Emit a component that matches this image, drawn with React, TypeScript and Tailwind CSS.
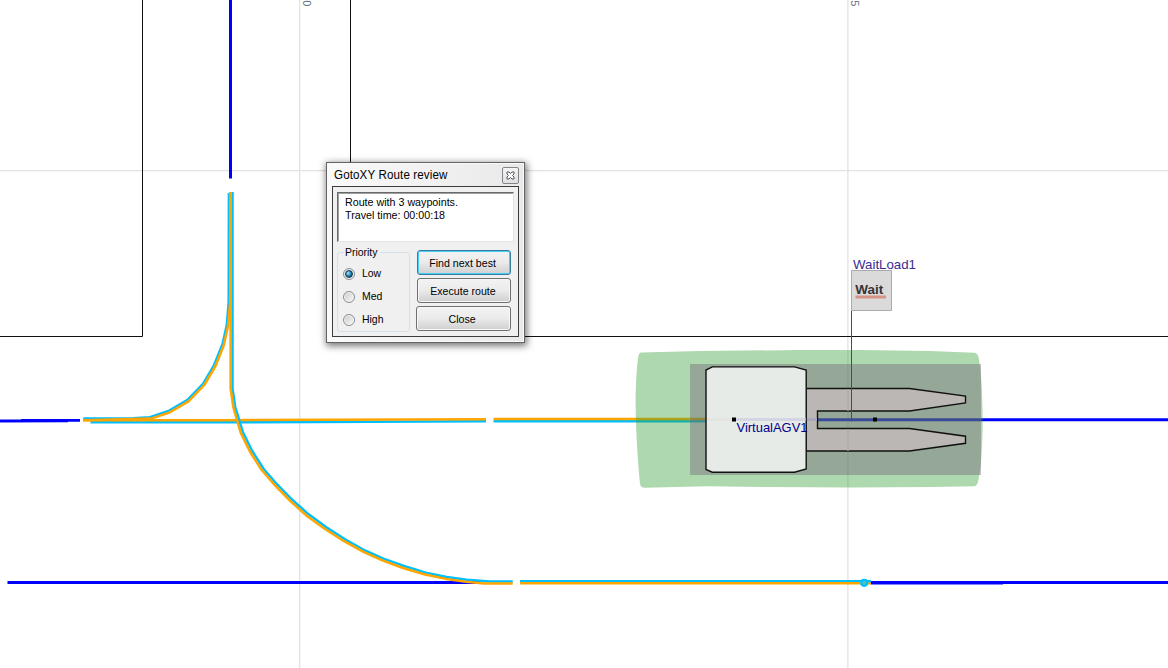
import React from "react";

function RouteMap() {
  return (
    <svg width="1168" height="668" viewBox="0 0 1168 668" className="block" fill="none">
      <g stroke="#e2e2e2" strokeWidth="1.3">
        <path d="M299.7 0V668M847.9 0V668M0 170.6H1168" />
      </g>
      <g fontFamily="Liberation Sans, sans-serif" fontSize="11" fill="#667080">
        <text transform="translate(303 0.3) rotate(90)">0</text>
        <text transform="translate(850.8 0.3) rotate(90)">5</text>
      </g>
      <g stroke="#111" strokeWidth="1">
        <path d="M142.5 0V336.5H0M350.5 0V336.5H1168" />
      </g>

      <g stroke="#0000ff" strokeWidth="3">
        <path d="M230.5 0V178.5" />
        <path d="M0 421L68 420.9M21 420.4H80" strokeWidth="2.8" />
        <path d="M704 419.7H1168" />
        <path d="M7.5 582.4H480M871 582.4H1168" />
        <path d="M871 583.1H1003" strokeWidth="2.6" />
      </g>

      <g strokeWidth="2.5" strokeLinejoin="round">
        <path stroke="#00bfff" d="M90.5 422.3H220L486 421.3M493.5 421.2H706" />
        <path stroke="#ffa500" d="M83 420.2H220L486 419.2M493.5 419.1H706" />
        <path stroke="#00bfff" d="M83.3 418.5L133 418.3L150 417.2L168.5 411L187.5 399.8L203 383.8L214 365.3L222.5 344.3L226.8 325L228.7 302L228.9 193" />
        <path stroke="#00bfff" d="M232.5 192V388.5L235.2 407L239.5 421L242.7 431.7L251.9 450.5L263.5 468.7L276.7 484L291.7 499.3L308.3 514.1L326 527.1L345 539.3L365 550.5L383.3 558.6L404 566L425.7 572.6L446.7 577L466.7 579.8L490 581.5H512.7" />
        <path stroke="#ffa500" d="M83.3 420.2L151 418.6L169.5 412.5L188.5 401.3L204.3 385L215.5 366L223.7 345.5L228 326L230.2 302L230.4 192" />
        <path stroke="#ffa500" d="M230.6 192V388.5L233.5 408L237 420L240.7 432.6L249.9 451.5L261.5 469.8L275.3 485.7L290.3 501L307 516L325 529L344 541.2L364 552.2L382.3 560.4L403 568L425 574.5L446 578.9L466 581.7L484 583.4H512.7" />
        <path stroke="#00bfff" d="M520 581.2H871" />
        <path stroke="#ffa500" d="M520 583.3H871" />
      </g>
      <path d="M864 581.2H871" stroke="#00bfff" strokeWidth="2.4" />
      <circle cx="864.2" cy="582.8" r="3" fill="#5bbfae" stroke="#00bfff" strokeWidth="2.2" />

      <path
        d="M641 352.6L700 351L800 350L860 350L930 351L974 352.8Q977.5 353 978.5 357C981 369 982.5 391 982.7 420C982.5 445 981.5 467 978 482Q977 486 974 486.3L930 487L850 487.6L770 487L706 486.2L645 487.7Q640.5 487.8 640 484C638 463 636 435 635.6 406C635.5 388 636.5 371 638 358Q638.7 353 641 352.6Z"
        fill="#349e35"
        fillOpacity="0.4"
      />
      <path d="M690 364H981V475H690Z" fill="#705e75" fillOpacity="0.4" />
      <path
        d="M806 388.5H909.5L965.5 396V403L909.5 411H817.5V428.5H909.5L965.5 436.2V443.3L909.5 451H806Z"
        fill="#bab7b4"
        stroke="#111"
        strokeWidth="1.4"
      />
      <path d="M806 419.5H817" stroke="#aaa7bd" strokeWidth="3" />
      <path d="M848 389V411M848 429V451" stroke="#acaaa7" strokeWidth="1.2" />
      <path
        d="M712.3 366.9H794.5L806.2 370V469L794.5 472.2H712.3L706 469.5V370Z"
        fill="#e6ebe8"
        stroke="#111"
        strokeWidth="1.4"
      />
      <path d="M707 419.5H732" stroke="#e5e5df" strokeWidth="3" />
      <path d="M736 419.5H805.5" stroke="#d5d4e5" strokeWidth="3" />
      <path d="M851.5 311V421.5" stroke="#49418a" strokeWidth="1" />
      <path d="M732 417.5H736V421.5H732ZM873 417.5H877V421.5H873Z" fill="#000" />
      <text x="736.5" y="432" fontFamily="Liberation Sans, sans-serif" fontSize="13.3" fill="#00008b" textLength="71" lengthAdjust="spacingAndGlyphs">
        VirtualAGV1
      </text>

      <text x="853" y="269" fontFamily="Liberation Sans, sans-serif" fontSize="13.3" fill="#392b94" textLength="63" lengthAdjust="spacingAndGlyphs">
        WaitLoad1
      </text>
      <path d="M851.5 270.5H891.5V310.5H851.5Z" fill="#dadada" stroke="#aaa9ad" />
      <text x="855.3" y="293.5" fontFamily="Liberation Sans, sans-serif" fontSize="12.5" fontWeight="bold" fill="#393333" textLength="28" lengthAdjust="spacingAndGlyphs">
        Wait
      </text>
      <path d="M855.5 297H886" stroke="#d79485" strokeWidth="3" />
    </svg>
  );
}

function PriorityOption({ label, checked, onSelect }: { label: string; checked: boolean; onSelect: () => void }) {
  return (
    <label className="flex h-[23px] items-center gap-[7px] pl-[5px]">
      <input type="radio" name="priority" checked={checked} onChange={onSelect} className="sr-only" />
      <span className="flex size-3 items-center justify-center rounded-full border border-[#8a8f94] bg-linear-to-br from-[#c8cbce] to-[#fafafa] shadow-[inset_0_0_0_1px_#f4f4f4]">
        {checked && <span className="size-[8px] shrink-0 rounded-full border border-[#17384f] bg-radial-[at_35%_35%] from-[#a9ebff] via-[#2383b5] to-[#0b314c]" />}
      </span>
      <span className="origin-left scale-x-[0.95]">{label}</span>
    </label>
  );
}

function ActionButton({ label, focused = false, wide = false }: { label: string; focused?: boolean; wide?: boolean }) {
  return (
    <button
      className={`h-[25px] rounded-[3px] border bg-linear-to-b from-[#f3f3f3] from-0% via-[#ebebeb] via-49% to-[#cfcfcf] pt-px ${
        focused ? "border-[#377da2] shadow-[inset_0_0_0_1px_#49cff5]" : "border-[#707070] shadow-[inset_0_0_0_1px_#f7f7f7]"
      } ${wide ? "w-[95px]" : "w-[94px]"}`}
    >
      <span className="relative -left-px inline-block origin-center scale-x-[0.965]">{label}</span>
    </button>
  );
}

function RouteDialog() {
  const [priority, setPriority] = React.useState("Low");
  return (
    <section className="absolute top-[162px] left-[326px] flex h-[181px] w-[199px] flex-col border border-[#646464] bg-linear-to-r from-[#fafafa] to-[#e9e9e9] px-[5px] pb-[5px] shadow-[inset_0_0_0_1px_#fafafa,1px_2px_7px_1px_#0008]">
      <header className="flex h-[23px] shrink-0 items-center justify-between pl-[2px]">
        <h1 className="origin-left scale-x-[0.965] text-[12px] leading-[14px] tracking-[0.13px]">GotoXY Route review</h1>
        <button aria-label="Close dialog" className="mt-px flex size-[17px] items-center justify-center rounded-[2px] border border-[#85838a] bg-linear-to-b from-[#f4f4f4] to-[#dfdfdf]">
          <svg width="9" height="9" viewBox="0 0 9 9" fill="#fff" stroke="#55535c" strokeWidth="1">
            <path d="M1 1H3L4.5 2.6L6 1H8V3L6.5 4.5L8 6V8H6L4.5 6.4L3 8H1V6L2.5 4.5L1 3Z" />
          </svg>
        </button>
      </header>
      <div className="flex min-h-0 flex-1 flex-col border border-[#3c3c3c] bg-[#f0f0f0] pt-[5px] pl-1 text-[11px] leading-[13px]">
        <div className="h-[50px] w-[177px] shrink-0 border border-t-[#696969] border-r-[#e3e3e3] border-b-[#e3e3e3] border-l-[#696969] bg-white pt-[3px] pl-[7px] shadow-[inset_1px_1px_0_#a0a0a0]">
          <p className="origin-left scale-x-[0.972] whitespace-nowrap">Route with 3 waypoints.</p>
          <p className="origin-left scale-x-[0.972] whitespace-nowrap">Travel time: 00:00:18</p>
        </div>
        <div className="flex pt-[4px]">
          <fieldset className="h-[86px] w-[73px] min-w-0 shrink-0 rounded-[3px] border border-[#d5dfe5]">
            <legend className="ml-[6px] h-[13px] origin-left scale-x-[0.95] px-px leading-[13px]">Priority</legend>
            <div className="pt-[3px]">
              {["Low", "Med", "High"].map((level) => (
                <PriorityOption key={level} label={level} checked={priority === level} onSelect={() => setPriority(level)} />
              ))}
            </div>
          </fieldset>
          <div className="ml-[6px] flex flex-col items-end gap-[3px] pt-[4px]">
            <ActionButton label="Find next best" focused />
            <ActionButton label="Execute route" />
            <ActionButton label="Close" wide />
          </div>
        </div>
      </div>
    </section>
  );
}

export default function App() {
  return (
    <main className="relative h-[668px] w-[1168px] overflow-hidden bg-white font-['Liberation_Sans',sans-serif] text-black">
      <RouteMap />
      <RouteDialog />
    </main>
  );
}
